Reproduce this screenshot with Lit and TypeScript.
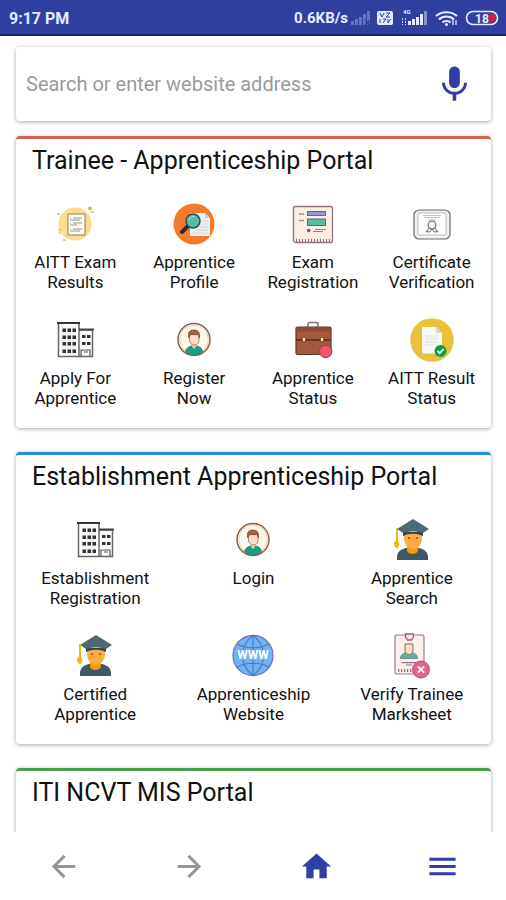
import { LitElement, html, css, svg, nothing, TemplateResult } from "lit";
import { customElement, property } from "lit/decorators.js";

const grid = (xs: number[], ys: number[], w: number, h: number) =>
  ys.flatMap((y) => xs.map((x) => svg`<rect x=${x} y=${y} width=${w} height=${h} fill="#333" />`));

const graduate = svg`
  <path d="M7 42v-3c0-5 4-8 9-9h13c5 1 9 4 9 9v3z" fill="#3f5866" />
  <path d="M17 25h11v8c-2 4-9 4-11 0z" fill="#f29a0c" />
  <path d="M14 14h18v6c0 6-4 11-9 11s-9-5-9-11z" fill="#ffab40" />
  <path d="M13 14h20v4c-6-3-14-3-20 0z" fill="#33464f" />
  <circle cx="19" cy="20" r="1" fill="#8a5a20" /><circle cx="27" cy="20" r="1" fill="#8a5a20" />
  <path d="M23 1 39 11l-6 4c-6-2-14-2-20 0l-6-4z" fill="#4c6978" />
  <path d="M8 11H7v14" fill="none" stroke="#f2b51d" stroke-width="2" />
  <path d="M7 22c3 2 3 5 0 9-4-4-4-7 0-9z" fill="#f2b90d" />`;

const building = svg`
  <path d="M5.500 5v33.500h34V12M26 12h14M26 5v33" fill="none" stroke="#666" stroke-width="1.500" />
  <path d="M4 5h23" stroke="#333" stroke-width="2" />
  <path d="M26 11.500h15" stroke="#444" stroke-width="2" />
  <path d="M8 8h15v28H8z" fill="#f2f2f2" />
  ${grid([9.5, 14.500, 19.500], [10.500, 17.500, 24, 31.500], 3.500, 3.500)}
  ${grid([29, 34], [17, 24], 3.500, 3)}
  <path d="M28 38v-6h9v6M31 34h4" fill="none" stroke="#555" stroke-width="1.200" />`;

const person = svg`
  <circle cx="22" cy="21.500" r="16" fill="#fff8ec" stroke="#875f4b" stroke-width="1.500" />
  <circle cx="22" cy="21.500" r="14.300" fill="none" stroke="#e2c9a8" stroke-width=".8" />
  <path d="M13.500 33.500c1-4 4-5 6-5.500h5c3 .5 5 1.500 6 5.500-5 4.500-12 4.500-17 0z" fill="#16a086" stroke="#216b5c" stroke-width=".7" />
  <path d="M20 25h4v4l-2 2-2-2z" fill="#f1c3a0" />
  <path d="M17.500 16h9.500v6c0 3-2 5-4.700 5s-4.800-2-4.800-5z" fill="#fbdcc8" stroke="#8a6050" stroke-width=".7" />
  <path d="M16.500 20v-4c0-3 3-4.500 6-4 3 0 5 2 5 5v3l-1.500-3.500c-3 .5-5.500 0-7 0z" fill="#a9603a" stroke="#6f3c24" stroke-width=".6" />`;

const icons: Record<string, TemplateResult> = {
  results: svg`
    <circle cx="22" cy="22" r="16.500" fill="#f9dc8c" />
    <path d="M15 12h17v21H15z" fill="#fffdf4" stroke="#8b7f60" stroke-width="1" />
    <path d="M17 16h1m2 0h9M17 18h10M17 21h1m2 0h9M17 23h7M17 27h1m2 0h9M17 29h10" stroke="#8c8c80" stroke-width=".9" />
    <circle cx="37" cy="6.500" r="2" fill="#dcb73a" /><circle cx="7" cy="28" r="1.700" fill="#f2c84c" />
    <path d="M4 12h3M38 10h3M10 38h3M5.500 31h2" stroke="#9a9a8a" />`,
  profile: svg`
    <circle cx="22" cy="22" r="20.500" fill="#f47a2c" />
    <path d="M18 11h15l5 5v18H18z" fill="#eef1f4" /><path d="m33 11 5 5h-5z" fill="#c6ccd2" />
    <path d="M30 19h6M30 22h6M27 25h9M24 28h12M21 31h15" stroke="#c3cbd3" stroke-width=".8" />
    <path d="m16 24-6 6" stroke="#243038" stroke-width="4" stroke-linecap="round" />
    <circle cx="21" cy="19" r="7" fill="#4fbfa8" stroke="#35484e" stroke-width="1.500" />
    <path d="M17 18c1-3 3-4 6-3" fill="none" stroke="#a5e3d4" />`,
  form: svg`
    <rect x="2.500" y="4.500" width="39" height="36" rx="2" fill="#fdeee4" stroke="#927187" stroke-width="1.300" />
    <rect x="16.500" y="9.500" width="18" height="4" fill="#8d9bd8" stroke="#5e63a4" stroke-width="1" />
    <rect x="16.500" y="17" width="18" height="6.500" fill="#55c0a0" stroke="#4c6a86" stroke-width="1" />
    <path d="M8 12h5M8 18.500h5" stroke="#a78b9b" stroke-width="1.500" />
    <circle cx="17.700" cy="28.500" r="1.800" fill="#7d4f84" />
    <path d="M22 29.500h10M24 27.500h11" stroke="#9b7a95" />
    <path d="M5 38.500h34" stroke="#896b80" stroke-width="3" stroke-dasharray="1 2" />`,
  certificate: svg`
    <rect x="4" y="8" width="36" height="29" rx="5" fill="#f1f1f1" stroke="#6a6a6a" stroke-width="1.200" />
    <rect x="8" y="11" width="28" height="22" rx="1" fill="#fdfdfd" stroke="#b0b0b0" stroke-width=".8" />
    <path d="M13 13.500h18M14 15.500h16M18 18h8" stroke="#bbb" stroke-width=".9" />
    <circle cx="22" cy="23" r="3.800" fill="#f6f6f6" stroke="#777" stroke-width="1.300" />
    <path d="m19 26-2.500 3.500 3 .5 2.500-3 2.500 3 3-.5L25 26" fill="none" stroke="#777" stroke-width="1.100" />`,
  building,
  person,
  briefcase: svg`
    <path d="M17 9V6q0-1.500 2-1.500h6q2 0 2 1.500v3" fill="none" stroke="#777" stroke-width="1.500" />
    <rect x="5" y="9" width="35" height="27.500" rx="1.500" fill="#a5593c" stroke="#51342e" stroke-width="1.200" />
    <path d="M5.500 9.500h34v4h-34z" fill="#8d4c36" />
    <path d="M5 22h34" stroke="#542c22" stroke-width="1.400" />
    <path d="M11.500 19.500h3v4h-3zM29.500 19.500h3v4h-3z" fill="#ffe9b8" stroke="#5d3d28" stroke-width=".7" />
    <circle cx="34.700" cy="33.500" r="6.200" fill="#f4566c" stroke="#9b3a4c" stroke-width="1" />`,
  approved: svg`
    <circle cx="22" cy="22" r="21.800" fill="#e9c23c" />
    <path d="M12 9h14l6 6v20.500H12z" fill="#f8f8fa" /><path d="m26 9 6 6h-6z" fill="#d4d4dc" />
    <path d="M15 18h13M15 21h13M15 24h13M15 27h9" stroke="#dcdce2" />
    <circle cx="30.500" cy="33" r="6" fill="#0b9c45" />
    <path d="m27.500 33 2.200 2.200 4-4.200" fill="none" stroke="#fff" stroke-width="1.800" />`,
  graduate,
  web: svg`
    <circle cx="22" cy="21.500" r="20" fill="#6cb4f4" stroke="#6a74b8" stroke-width="1.300" />
    <path d="M22 1.500v40M22 1.500C8 12 8 31 22 41.500M22 1.500c14 10.500 14 29.500 0 40M6 10c9 5 23 5 32 0M6 33c9-5 23-5 32 0" fill="none" stroke="#5a72bd" stroke-width="1.200" />
    <path d="M3 16h38v10H3z" fill="#6cb4f4" />
    <text class="www" x="22" y="25" text-anchor="middle">WWW</text>`,
  marksheet: svg`
    <rect x="5" y="1" width="29" height="39" rx="1.500" fill="#fdeee8" stroke="#9a7a9a" stroke-width="1.200" />
    <path d="M15.500 0h8v3l-2 3h-4l-2-3z" fill="#fbe0d4" stroke="#8d6386" stroke-width="1.300" />
    <path d="M10.500 24.500c0-4 3-5.500 6-6h5c3 .5 6 2 6 6z" fill="#53b79c" stroke="#6a7f8c" stroke-width=".8" />
    <path d="M15 10h8v6c0 3-2 4.500-4 4.500S15 19 15 16z" fill="#fde0b6" stroke="#8a6386" stroke-width="1" />
    <path d="M12 28.700h14M16 31h6" stroke="#8d7391" stroke-width="1.200" />
    <path d="M8 36.500h15" stroke="#8d6f85" stroke-width="3" stroke-dasharray="1.200 1.800" />
    <circle cx="31" cy="35.500" r="8.500" fill="#e3628f" stroke="#b45486" stroke-width="1" />
    <path d="m27.800 32.300 6.400 6.400m0-6.400-6.400 6.400" stroke="#fff" stroke-width="1.700" />`,
};

type Item = [icon: string, first: string, second?: string];

const trainee: Item[] = [
  ["results", "AITT Exam", "Results"],
  ["profile", "Apprentice", "Profile"],
  ["form", "Exam", "Registration"],
  ["certificate", "Certificate", "Verification"],
  ["building", "Apply For", "Apprentice"],
  ["person", "Register", "Now"],
  ["briefcase", "Apprentice", "Status"],
  ["approved", "AITT Result", "Status"],
];

const establishment: Item[] = [
  ["building", "Establishment", "Registration"],
  ["person", "Login"],
  ["graduate", "Apprentice", "Search"],
  ["graduate", "Certified", "Apprentice"],
  ["web", "Apprenticeship", "Website"],
  ["marksheet", "Verify Trainee", "Marksheet"],
];

@customElement("portal-card")
class PortalCard extends LitElement {
  @property() heading = "";
  @property({ attribute: false }) items: Item[] = [];

  static styles = css`
    :host {
      display: block;
      min-height: 292px;
      box-sizing: border-box;
      background: #fff;
      border-top: 3px solid var(--accent);
      border-radius: 4px;
      box-shadow: 0 1px 4px rgba(0, 0, 0, 0.35);
    }
    h2 {
      margin: 0;
      padding: 6px 16px 0;
      font-size: 25px;
      line-height: 32px;
      font-weight: 400;
      color: #111;
    }
    .items {
      display: grid;
      grid-template-columns: repeat(var(--columns), minmax(0, 1fr));
      row-gap: 26px;
      padding: 25px 0 20px;
    }
    a {
      display: flex;
      flex-direction: column;
      align-items: center;
      gap: 6px;
      color: #111;
      font-size: 17px;
      line-height: 20px;
      text-align: center;
      text-decoration: none;
    }
    .icon {
      width: 44px;
      height: 44px;
      overflow: visible;
    }
    .www {
      font: 700 12px Roboto, sans-serif;
      fill: #fff;
    }
  `;

  render() {
    return html`
      <h2>${this.heading}</h2>
      ${this.items.length
        ? html`<div class="items">
            ${this.items.map(
              ([icon, first, second]) => html`<a href="#">
                <svg class="icon" viewBox="0 0 44 44" aria-hidden="true">${icons[icon]}</svg>
                <span>${first}${second ? html`<br />${second}` : nothing}</span>
              </a>`
            )}
          </div>`
        : nothing}
    `;
  }
}

@customElement("app-root")
class AppRoot extends LitElement {
  static styles = css`
    :host {
      display: flex;
      flex-direction: column;
      height: 100vh;
      background: #fff;
      font-family: Roboto, "Liberation Sans", sans-serif;
    }
    .status {
      display: flex;
      align-items: center;
      justify-content: space-between;
      box-sizing: border-box;
      flex: none;
      height: 36px;
      padding: 2px 7px 0 9px;
      background: #303f9f;
      border-bottom: 2px solid #151f86;
      color: #e8ebff;
      font-size: 16px;
      font-weight: 700;
    }
    .indicators {
      display: flex;
      align-items: center;
      gap: 3px;
      font-size: 15px;
    }
    .glyphs {
      width: 148px;
      height: 20px;
    }
    .battery {
      font: 700 12px Roboto, sans-serif;
      fill: #e8ebff;
    }
    .network {
      font: 700 6px Roboto, sans-serif;
      fill: #e8ebff;
    }
    main {
      flex: 1;
      min-height: 0;
      overflow-y: auto;
      scrollbar-width: none;
      padding: 11px 15px 0 16px;
    }
    .search {
      display: flex;
      align-items: center;
      height: 74px;
      margin-bottom: 15px;
      padding: 0 15px 0 10px;
      box-sizing: border-box;
      border-radius: 4px;
      box-shadow: 0 1px 4px rgba(0, 0, 0, 0.35);
    }
    input {
      flex: 1;
      min-width: 0;
      border: 0;
      padding: 0;
      outline: 0;
      background: none;
      font: 20px Roboto, "Liberation Sans", sans-serif;
      color: #222;
    }
    input::placeholder {
      color: #9a9a9a;
      opacity: 1;
    }
    button {
      display: flex;
      align-items: center;
      justify-content: center;
      padding: 0;
      border: 0;
      background: none;
      color: #303fa8;
    }
    .mic {
      width: 43px;
      height: 43px;
    }
    portal-card {
      margin-bottom: 24px;
    }
    .red {
      --accent: #cf6257;
      --columns: 4;
    }
    .blue {
      --accent: #2390d8;
      --columns: 3;
    }
    .green {
      --accent: #43a047;
      --columns: 4;
    }
    nav {
      display: grid;
      grid-template-columns: repeat(4, 1fr);
      flex: none;
      height: 68px;
      background: #fff;
    }
    nav svg {
      width: 35px;
      height: 35px;
    }
    .muted {
      color: #959595;
    }
  `;

  render() {
    const bars = (x: number, tone: string) =>
      [4, 6, 8, 11, 14].map((h, i) => svg`<rect x=${x + i * 4} y=${17 - h} width="3" height=${h} fill=${tone} />`);
    return html`
      <header class="status">
        <span>9:17 PM</span>
        <span class="indicators">
          <span>0.6KB/s</span>
          <svg class="glyphs" viewBox="0 0 148 20" aria-hidden="true">
            ${bars(0, "#6873bd")}
            <path d="m14 12 5 5m0-5-5 5" stroke="#303f9f" stroke-width="1.500" />
            <rect x="26" y="3" width="16" height="14" rx="2" fill="#e8ebff" />
            <path d="m29 5 2 4 2-4m2 0h4l-4 4h4M29 11v4m3-4h3l-3 4m5-4v4m3-4-3 4" fill="none" stroke="#303f9f" />
            <text class="network" x="52" y="6">4G</text>
            <path d="M51.500 10v7M54.500 10v7" stroke="#c5cbf3" stroke-dasharray="2 1" />
            ${[4, 6, 8, 11].map((h, i) => svg`<rect x=${57 + i * 4} y=${17 - h} width="3" height=${h} fill="#e8ebff" />`)}
            <rect x="73" y="3" width="3" height="14" fill="#8791d0" />
            <path d="M85 8c6-5 15-5 21 0M88 11.500c4-4 11-4 15 0M91.500 14.500c2-2 6-2 8 0" fill="none" stroke="#e8ebff" stroke-width="2.200" />
            <circle cx="95.500" cy="16.500" r="1.500" fill="#e8ebff" />
            <path d="M102 12v5m3-5v5" stroke="#c5cbf3" stroke-width="1.500" />
            <rect x="115.500" y="3.500" width="31" height="13" rx="6.500" fill="none" stroke="#e8ebff" stroke-width="1.600" />
            <circle cx="141" cy="10" r="4" fill="#cf2040" />
            <text class="battery" x="131" y="14.500" text-anchor="middle">18</text>
          </svg>
        </span>
      </header>
      <main>
        <form class="search" @submit=${(e: Event) => e.preventDefault()}>
          <input type="text" aria-label="Search or enter website address" placeholder="Search or enter website address" />
          <button type="button" aria-label="Voice search">
            <svg class="mic" viewBox="0 0 24 24" fill="currentColor">
              <path d="M12 14c1.660 0 3-1.340 3-3V5c0-1.660-1.340-3-3-3S9 3.340 9 5v6c0 1.660 1.340 3 3 3zm5.300-3c0 3-2.540 5.100-5.300 5.100S6.700 14 6.700 11H5c0 3.410 2.720 6.230 6 6.720V21h2v-3.280c3.280-.48 6-3.300 6-6.720h-1.700z" />
            </svg>
          </button>
        </form>
        <portal-card class="red" heading="Trainee - Apprenticeship Portal" .items=${trainee}></portal-card>
        <portal-card class="blue" heading="Establishment Apprenticeship Portal" .items=${establishment}></portal-card>
        <portal-card class="green" heading="ITI NCVT MIS Portal"></portal-card>
      </main>
      <nav aria-label="Browser">
        <button class="muted" type="button" aria-label="Back">
          <svg viewBox="0 0 24 24" fill="currentColor"><path d="M20 11H7.830l5.590-5.590L12 4l-8 8 8 8 1.410-1.410L7.830 13H20v-2z" /></svg>
        </button>
        <button class="muted" type="button" aria-label="Forward">
          <svg viewBox="0 0 24 24" fill="currentColor"><path d="m12 4-1.410 1.410L16.170 11H4v2h12.170l-5.580 5.590L12 20l8-8z" /></svg>
        </button>
        <button type="button" aria-label="Home">
          <svg viewBox="0 0 24 24" fill="currentColor"><path d="M10 20v-6h4v6h5v-8h3L12 3 2 12h3v8z" /></svg>
        </button>
        <button type="button" aria-label="Menu">
          <svg viewBox="0 0 24 24" fill="currentColor"><path d="M3 18h18v-2H3v2zm0-5h18v-2H3v2zm0-7v2h18V6H3z" /></svg>
        </button>
      </nav>
    `;
  }
}
